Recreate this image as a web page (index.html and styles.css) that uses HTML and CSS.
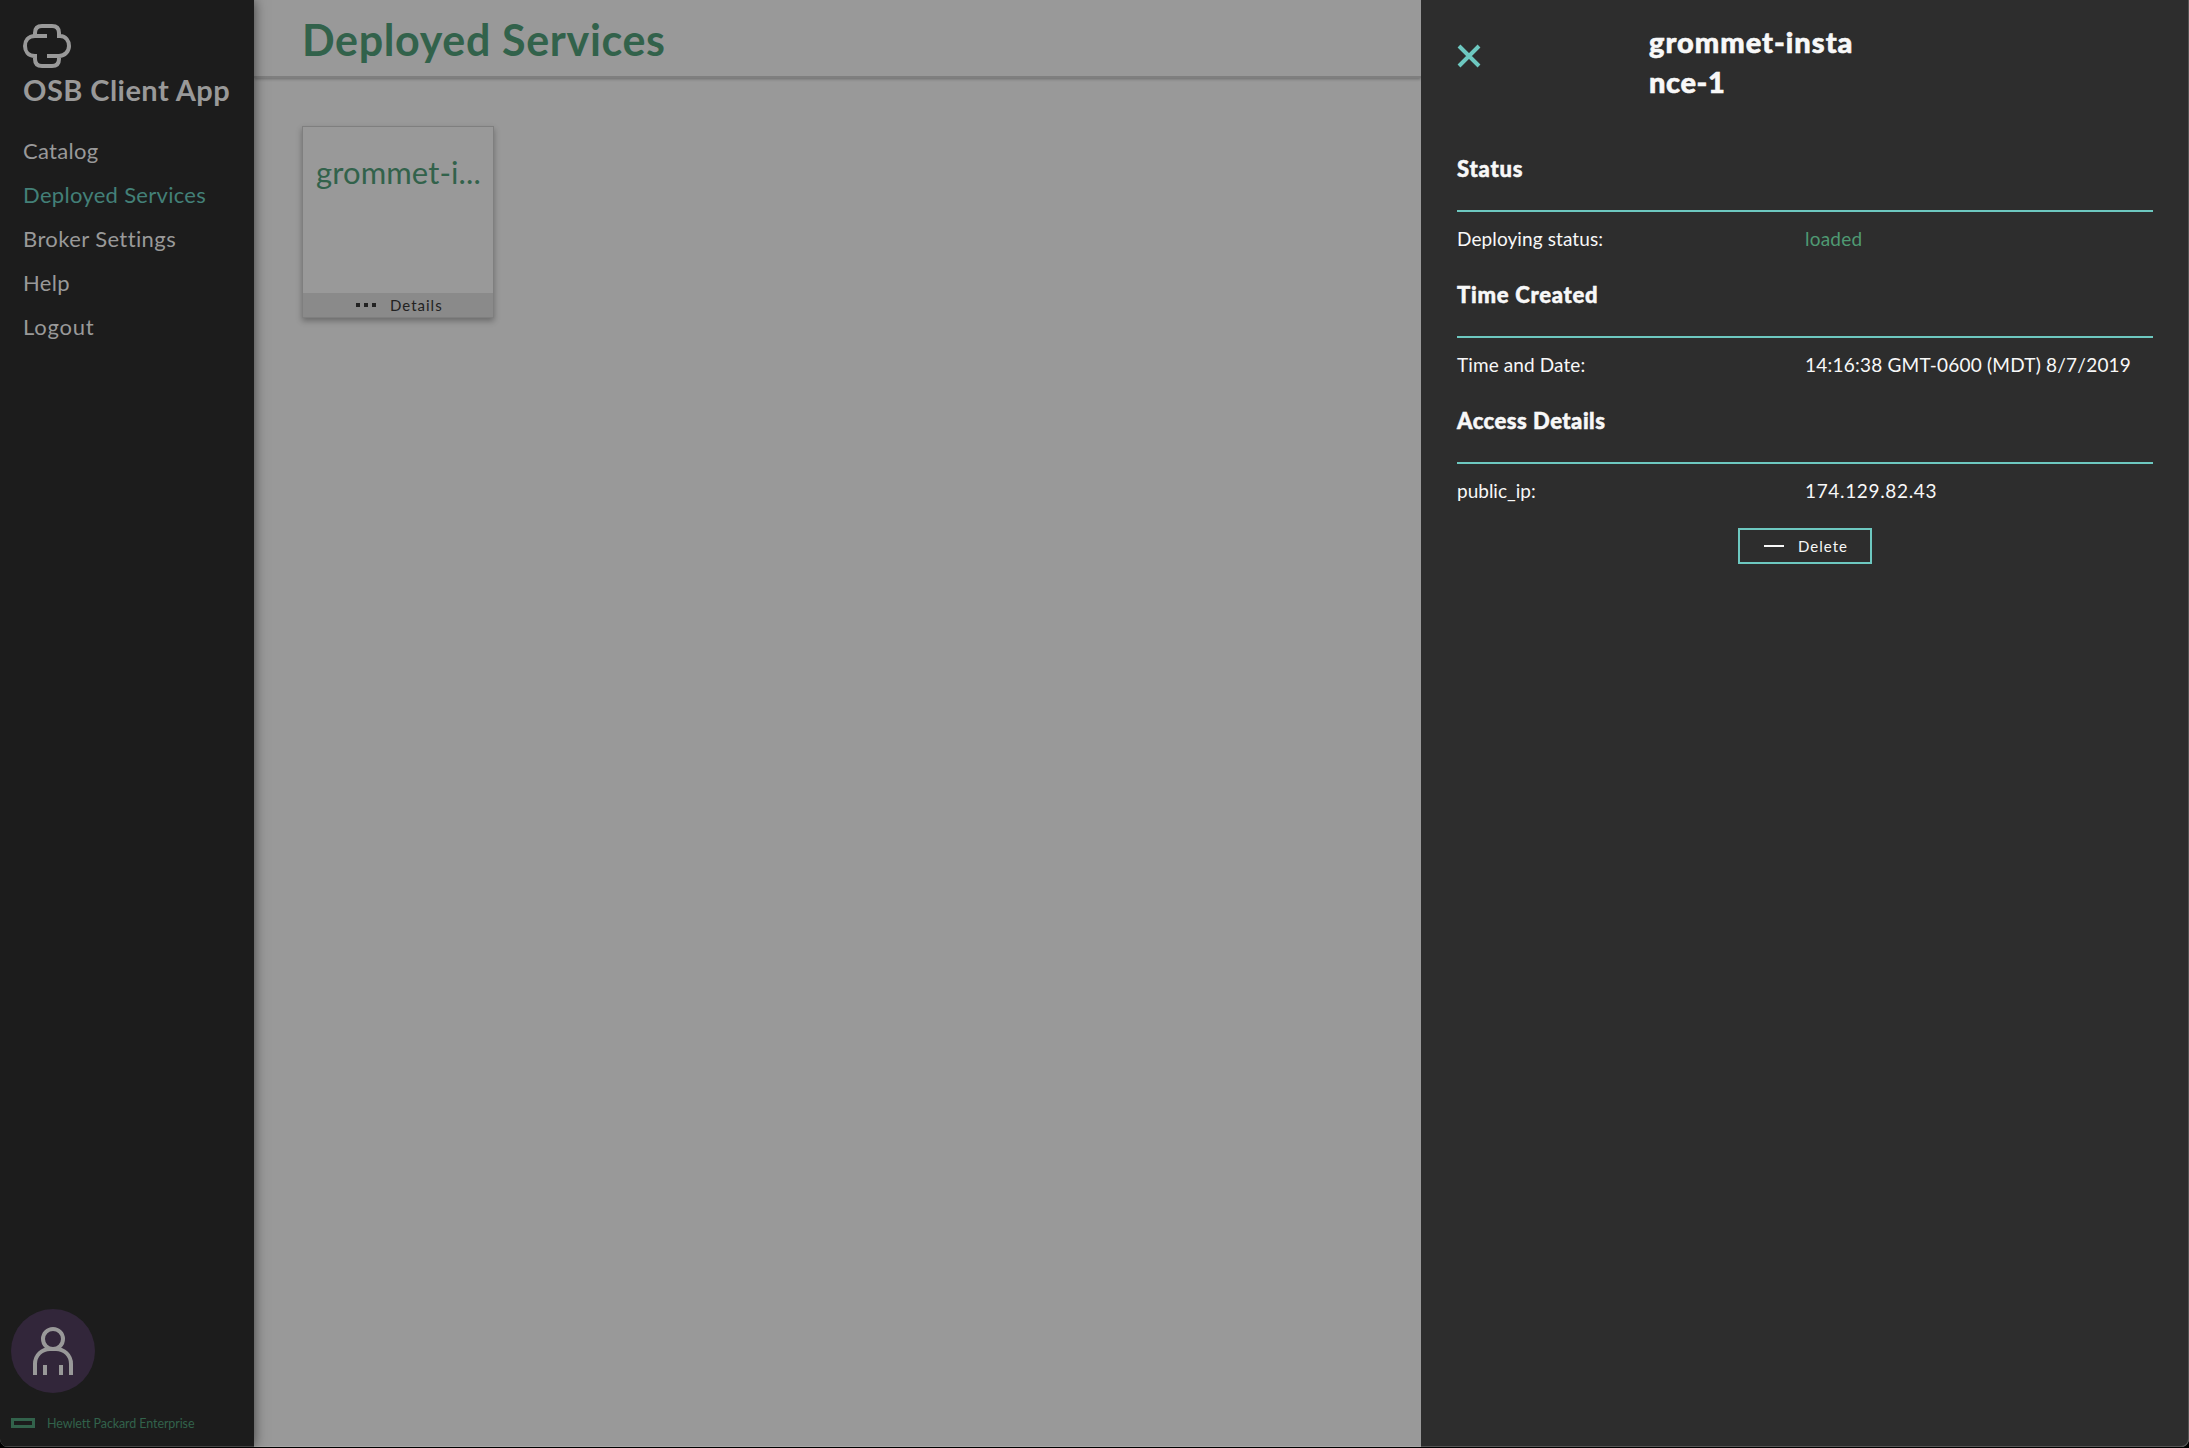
FILE: index.html
```html
<!DOCTYPE html>
<html lang="en">
<head>
<meta charset="utf-8">
<title>OSB Client App</title>
<link rel="stylesheet" href="styles.css">
</head>
<body>
<div class="app">
  <nav class="sidebar">
    <svg class="logo" viewBox="0 0 48 44" width="48" height="44"><path d="M24 12H12C5 12 2 17 2 22S5 32 12 32H14M12 14V9C12 4 15 2 19 2H29C33 2 36 4 36 9V14M34 12H37C43 12 46 17 46 22S42 32 36 32H24M36 32V35C36 40 33 42 29 42H19C15 42 12 40 12 35V30"/></svg>
    <h2 class="brand"><span class="t-brand">OSB Client App</span></h2>
    <ul class="menu">
      <li><span class="t-catalog">Catalog</span></li>
      <li class="active"><span class="t-deployed">Deployed Services</span></li>
      <li><span class="t-broker">Broker Settings</span></li>
      <li><span class="t-help">Help</span></li>
      <li><span class="t-logout">Logout</span></li>
    </ul>
    <div class="avatar">
      <svg viewBox="0 0 40 48" width="40" height="48"><circle cx="20" cy="12" r="10"/><path d="M2 48V37C2 28 9 22 17 22H23C31 22 38 28 38 37V48M12 38V48M28 38V48"/></svg>
    </div>
    <div class="company"><i class="mark"></i><span class="t-company">Hewlett Packard Enterprise</span></div>
  </nav>
  <main class="content">
    <header class="page-header"><h1><span class="t-title">Deployed Services</span></h1></header>
    <section class="cards">
      <article class="card">
        <div class="card-name"><span class="t-card">grommet-i...</span></div>
        <div class="card-action"><i class="dots"></i><span class="t-details">Details</span></div>
      </article>
    </section>
  </main>
  <aside class="panel">
    <div class="panel-head">
      <svg class="close" viewBox="0 0 24 24" width="24" height="24"><path d="M2 2L22 22M22 2L2 22"/></svg>
      <h2><span class="t-name1">grommet-insta</span><br><span class="t-name2">nce-1</span></h2>
    </div>
    <section class="group">
      <h3><span class="t-status">Status</span></h3>
      <div class="row"><span><span class="t-dep">Deploying status:</span></span><span class="ok"><span class="t-loaded">loaded</span></span></div>
    </section>
    <section class="group">
      <h3><span class="t-created">Time Created</span></h3>
      <div class="row"><span><span class="t-td">Time and Date:</span></span><span><span class="t-time">14:16:38 GMT-0600 (MDT) 8/7/2019</span></span></div>
    </section>
    <section class="group">
      <h3><span class="t-access">Access Details</span></h3>
      <div class="row"><span><span class="t-pip">public_ip:</span></span><span><span class="t-ip">174.129.82.43</span></span></div>
    </section>
    <button class="delete"><i class="minus"></i><span class="t-delete">Delete</span></button>
  </aside>
</div>
</body>
</html>
```
FILE: styles.css
```css
* { box-sizing: border-box; }
body { margin: 0; font-family: Lato, sans-serif; background: #000; }
h1, h2, h3, ul { margin: 0; padding: 0; }
svg { display: block; fill: none; }
.app { display: flex; width: 2189px; height: 1447px; overflow: hidden; border-radius: 0 0 8px 8px; background: #999; }

.sidebar { width: 254px; display: flex; flex-direction: column; background: #1c1c1c; color: #999; border-bottom: 1px solid #444; box-shadow: 0 0 12px rgba(0,0,0,.6); z-index: 1; }
.logo { margin: 24px 0 0 23px; stroke: #999; stroke-width: 4; }
.brand { margin-left: 23px; height: 46px; font-size: 29px; line-height: 44px; font-weight: 700; white-space: nowrap; }
.menu { margin: 15px 0 0 23px; list-style: none; }
.menu li { height: 44px; line-height: 44px; font-size: 22px; white-space: nowrap; }
.active { color: #438078; }
.avatar { width: 84px; height: 84px; margin: auto 0 0 11px; border-radius: 50%; background: #32263a; display: flex; justify-content: center; padding-top: 18px; }
.avatar svg { stroke: #999; stroke-width: 4; }
.company { height: 20px; margin: 20px 0 13px 11px; display: flex; align-items: center; gap: 12px; font-size: 12.5px; color: #32624b; white-space: nowrap; }
.mark { width: 24px; height: 10px; border: 3px solid #32624b; }

.content { width: 1167px; border-bottom: 1px solid #a6a6a6; }
.page-header { height: 78px; padding-left: 48px; border-bottom: 2px solid #7f7f7f; box-shadow: 0 1px 3px rgba(0,0,0,.3); }
.page-header h1 { font-size: 43px; line-height: 80px; color: #32624b; font-weight: 700; }
.cards { padding: 48px; }
.card { width: 192px; height: 192px; border: 1px solid #7f7f7f; box-shadow: 0 3px 6px rgba(0,0,0,.3); display: flex; flex-direction: column; justify-content: space-between; }
.card-name { padding: 23px 0 0 13px; font-size: 31px; line-height: 44px; color: #32624b; white-space: nowrap; }
.card-action { height: 24px; display: flex; align-items: center; padding-left: 53px; gap: 14px; background: #8a8a8a; color: #222; font-size: 15px; }
.dots { width: 20px; height: 4px; background: repeating-linear-gradient(90deg, #222 0 4px, transparent 4px 8px); }

.panel { width: 768px; padding: 0 35px 0 36px; background: #2d2d2d; color: #f8f8f8; border: solid #555; border-width: 0 1px 1px 0; border-radius: 0 0 8px 0; display: flex; flex-direction: column; z-index: 2; }
.panel-head { height: 140px; display: flex; }
.close { margin: 44px 168px 0 0; stroke: #6dc8c0; stroke-width: 4; }
.panel-head h2 { margin-top: 22px; font-size: 29px; line-height: 40px; font-weight: 900; white-space: nowrap; -webkit-text-stroke: .6px; }
.group { height: 126px; }
.group h3 { height: 72px; padding-top: 13px; border-bottom: 2px solid #6dc8c0; font-size: 22px; line-height: 32px; font-weight: 900; -webkit-text-stroke: .5px; }
.row { display: grid; grid-template-columns: 1fr 1fr; font-size: 19px; line-height: 54px; white-space: nowrap; }
.ok { color: #4f9a73; }
.delete { align-self: center; width: 134px; height: 36px; margin-top: 10px; padding: 0 0 0 24px; display: flex; align-items: center; gap: 14px; border: 2px solid #6dc8c0; background: none; color: #f8f8f8; font: 15px Lato, sans-serif; }
.minus { width: 20px; height: 2px; background: #f8f8f8; }

/* Tracking */
.t-details, .t-delete { letter-spacing: 1px; }
.t-brand { letter-spacing: .45px; }
.t-catalog, .t-deployed, .t-help { letter-spacing: .3px; }
.t-broker { letter-spacing: .4px; }
.t-logout { letter-spacing: .75px; }
.t-title { letter-spacing: .65px; }
.t-card { letter-spacing: .1px; }
.t-name1 { letter-spacing: 1px; }
.t-name2 { letter-spacing: .6px; }
.t-status { letter-spacing: .8px; }
.t-created { letter-spacing: .75px; }
.t-access { letter-spacing: .5px; }
.t-dep, .t-td { letter-spacing: .1px; }
.t-loaded, .t-time { letter-spacing: .22px; }
.t-ip { letter-spacing: .65px; }
.t-company { letter-spacing: -.1px; }
```
